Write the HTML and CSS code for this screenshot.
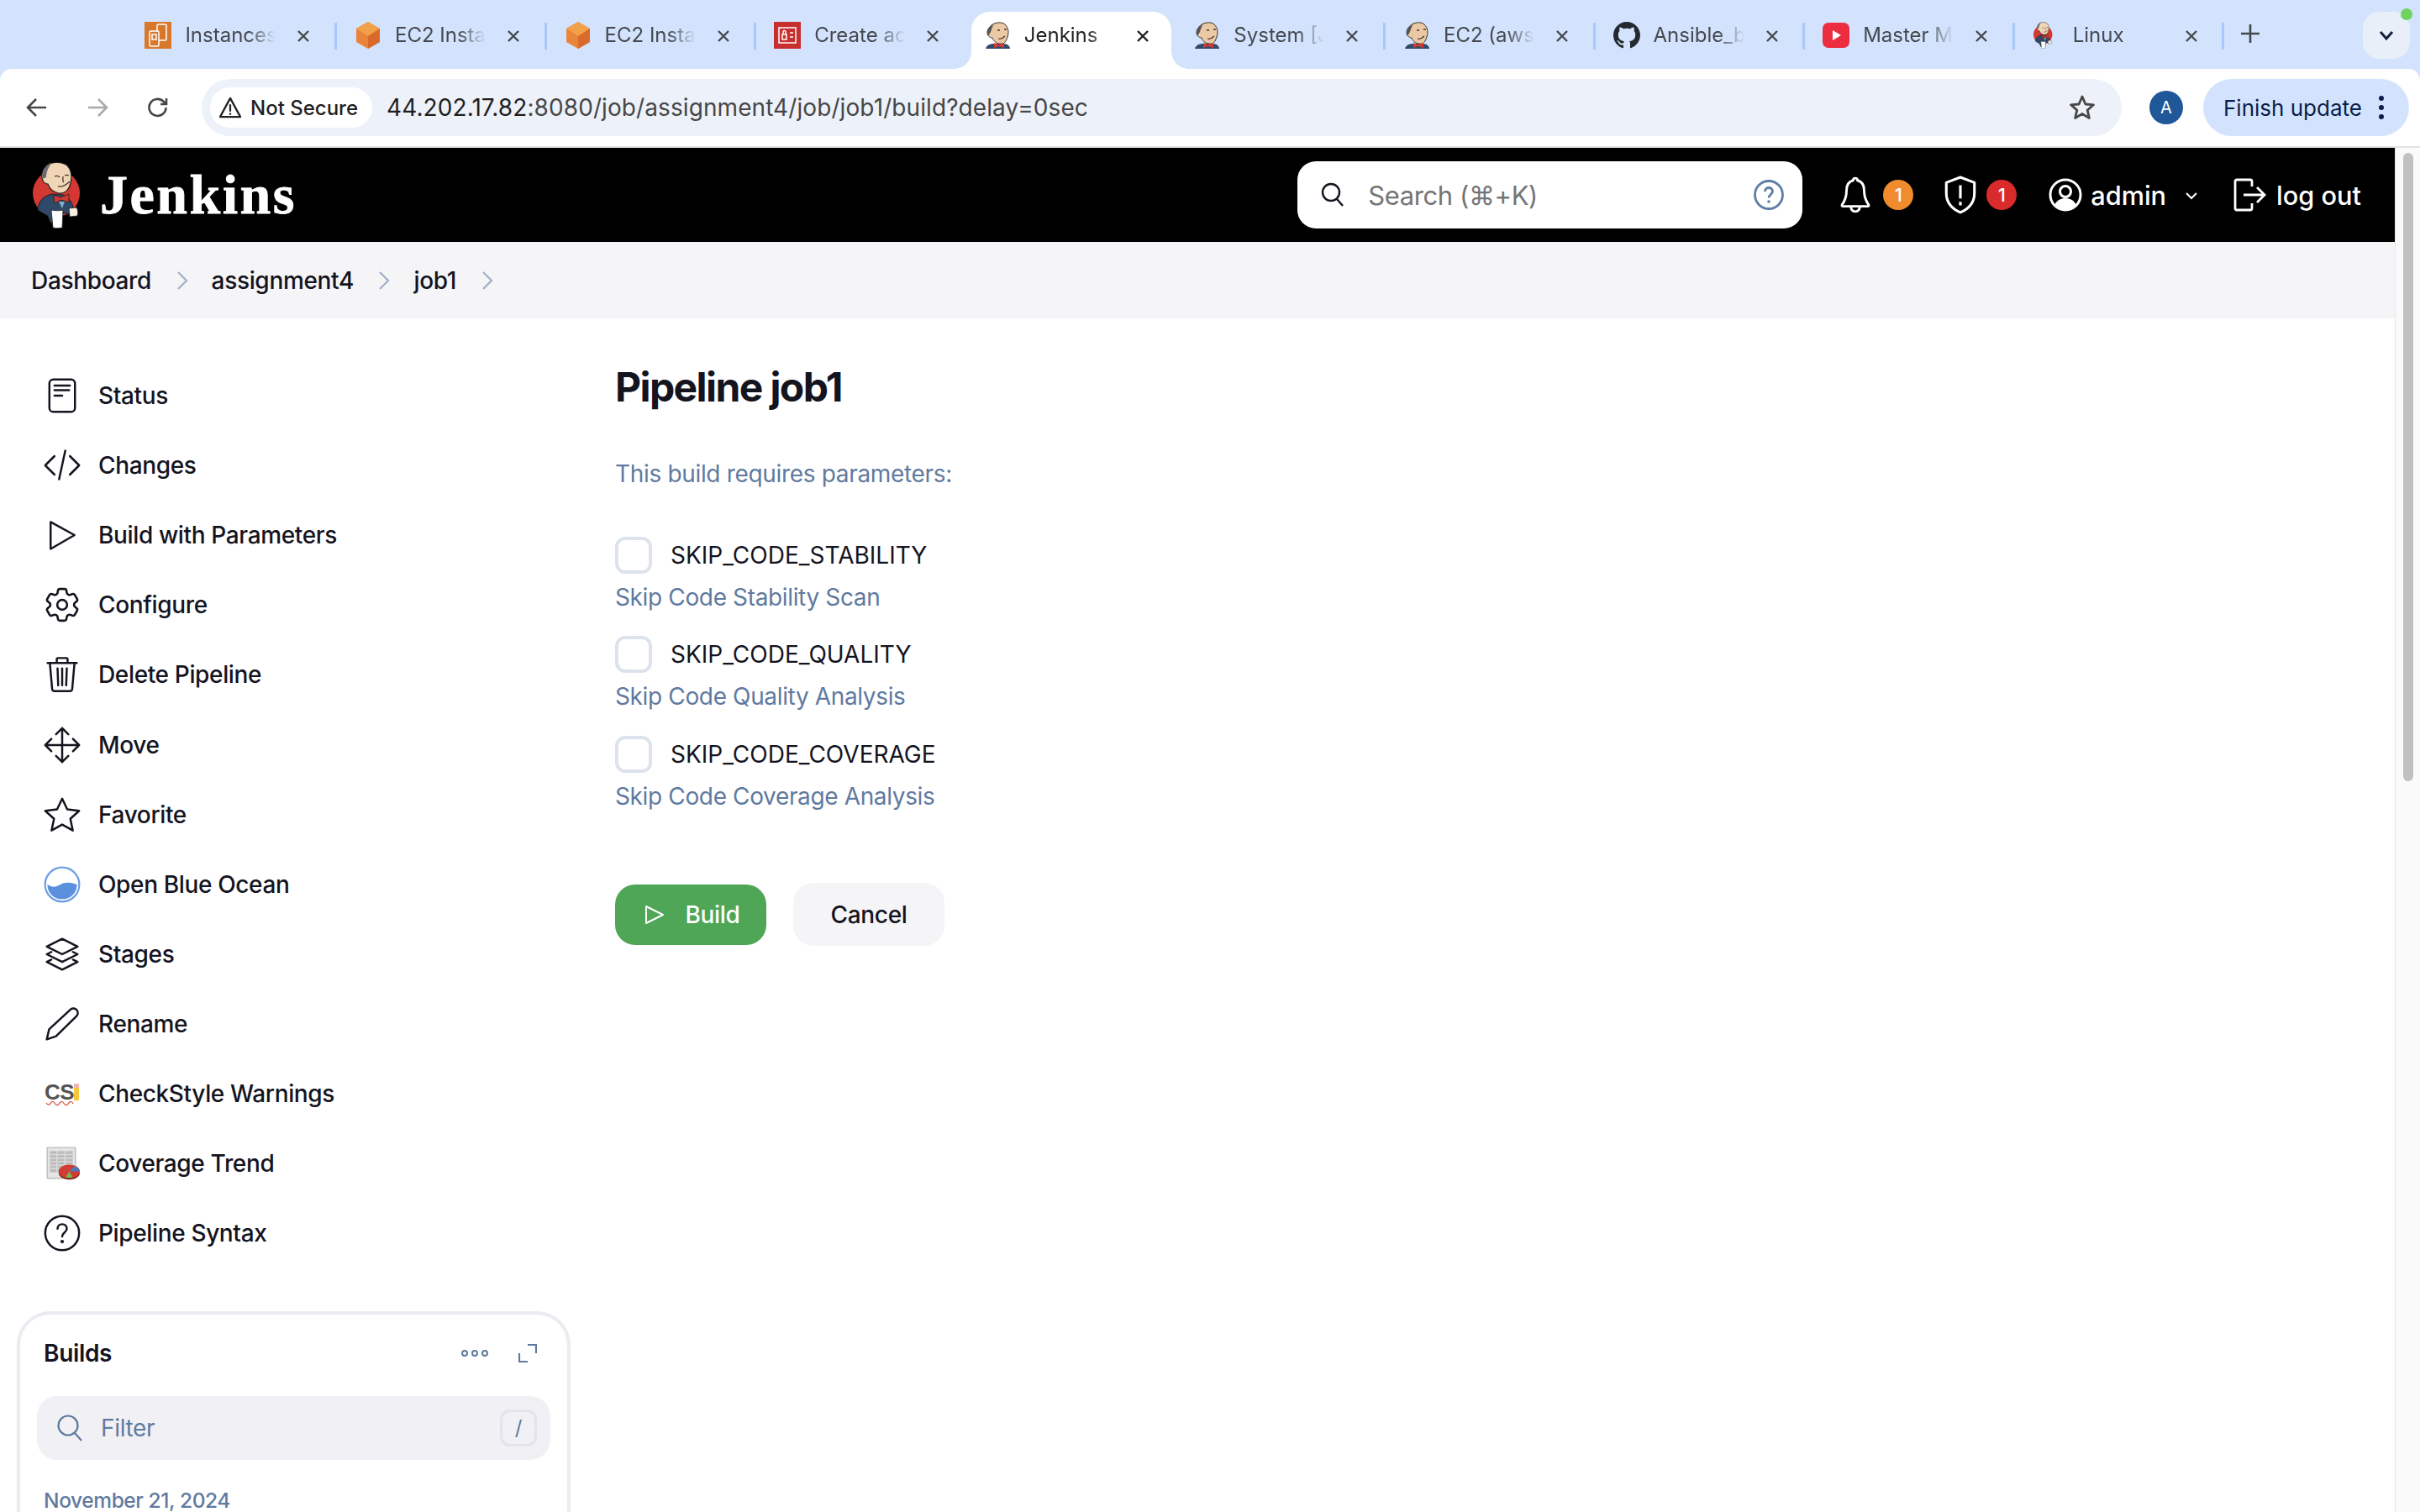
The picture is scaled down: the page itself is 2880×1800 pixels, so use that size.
FILE: index.html
```html
<!DOCTYPE html>
<html lang="en">
<head>
<meta charset="utf-8">
<title>Jenkins</title>
<link rel="stylesheet" href="styles.css">
</head>
<body>
<svg class="sprite" xmlns="http://www.w3.org/2000/svg">
  <symbol id="butler" viewBox="-1 0 32 32">
    <path d="M1 32c1-4 5-6 10-6h11c5 0 8 3 8 6z" fill="#2f4a68"/>
    <path d="M6 6C9 1 20-1 24 3c4 4 5 9 3 15-2 6-4 9-9 8-5 0-8-4-9-7-4 0-6-4-6-6 0-3 1-5 3-7z" fill="#ecc9a5" stroke="#333" stroke-width="1"/>
    <path d="M6 6C3 9 2 14 4 17l3-5c1-3 2-7 4-9z" fill="#555"/>
    <path d="M15 10h3M23 9h3M16 20c3 1 6-1 8-3" stroke="#49382c" stroke-width="1.300" fill="none"/>
    <path d="M11 25l5 2 7-2v6l-7-2-5 2z" fill="#d33833"/>
  </symbol>
  <symbol id="logo" viewBox="8 7 57 80">
    <circle cx="37" cy="45" r="28" fill="#d33833"/>
    <path d="M15 65c0-10 7-17 17-19l13 1c7 3 11 9 12 15l-5 8-7-2-2 14-13-2-3-8z" fill="#2f4a68" stroke="#231f20" stroke-width="1"/>
    <path d="M24 14c4-6 18-8 26-2 5 5 6 14 4 21-2 8-7 13-14 12-6-1-11-5-13-11-5 0-8-6-7-10 0-4 2-8 4-10z" fill="#f0d6b7" stroke="#231f20" stroke-width="1.200"/>
    <path d="M24 14c-3 3-5 9-3 14l4-2c0-5 2-12 7-17-3 0-6 2-8 5z" fill="#6d6b6d"/>
    <path d="M35 25c2-1 4-1 6 1M47 24c2-1 3-1 5 0M39 37c5 1 10-2 14-6M45 25c0 3-1 6 1 7" stroke="#49382c" stroke-width="1.300" fill="none"/>
    <path d="M34 47l8 3 10-4v10l-9-3-8 4z" fill="#d33833" stroke="#231f20" stroke-width=".8"/>
    <path d="M40 55h7l-3 8z" fill="#81b0c4"/>
    <path d="M31 65c5 1 10 1 14 0l-1 21c-4 1-8 1-11 0z" fill="#fff" stroke="#231f20" stroke-width=".8"/>
    <path d="M52 63l9-1c2 3 2 7 1 10l-9 1z" fill="#f5ede0" stroke="#231f20" stroke-width=".8"/>
  </symbol>
  <symbol id="ecube" viewBox="0 0 32 32">
    <path d="M16 0l14 8v16l-14 8-14-8V8z" fill="#e8853b"/>
    <path d="M16 0l14 8-14 9-14-9z" fill="#f2a04a"/>
    <path d="M16 17l14-9v16l-14 8z" fill="#d96a2c"/>
  </symbol>
  <symbol id="github" viewBox="0 0 16 16"><path fill="#24292f" d="M8 0C3.58 0 0 3.58 0 8c0 3.54 2.29 6.53 5.47 7.59.4.07.55-.17.55-.38 0-.19-.01-.82-.01-1.49-2.01.37-2.53-.49-2.69-.94-.09-.23-.48-.94-.82-1.13-.28-.15-.68-.52-.01-.53.63-.01 1.08.58 1.23.82.72 1.21 1.87.87 2.33.66.07-.52.28-.87.51-1.07-1.78-.2-3.64-.89-3.64-3.95 0-.87.31-1.59.82-2.15-.08-.2-.36-1.02.08-2.12 0 0 .67-.21 2.2.82.64-.18 1.32-.27 2-.27s1.36.09 2 .27c1.53-1.04 2.2-.82 2.2-.82.44 1.1.16 1.92.08 2.12.51.56.82 1.27.82 2.15 0 3.07-1.87 3.75-3.65 3.95.29.25.54.73.54 1.48 0 1.07-.01 1.93-.01 2.2 0 .21.15.46.55.38A8.01 8.01 0 0016 8c0-4.42-3.58-8-8-8z"/></symbol>
  <symbol id="close" viewBox="0 0 16 16"><path d="M2 2l12 12M14 2L2 14" fill="none" stroke-width="2.400"/></symbol>
</svg>

<div class="tabbar">
  <div class="tab sep">
    <svg class="favicon" viewBox="0 0 32 32"><rect width="32" height="32" fill="#d9782a"/><g fill="none" stroke="#fff" stroke-width="1.500"><rect x="15" y="3" width="11" height="19" rx="1.500"/><rect x="6" y="11" width="11" height="18" rx="1.500" fill="#d9782a"/><rect x="9" y="15" width="5" height="6"/></g></svg>
    <span class="tab-title">Instances | EC2</span><svg class="tab-x"><use href="#close"/></svg>
  </div>
  <div class="tab sep">
    <svg class="favicon"><use href="#ecube"/></svg>
    <span class="tab-title">EC2 Instance</span><svg class="tab-x"><use href="#close"/></svg>
  </div>
  <div class="tab sep">
    <svg class="favicon"><use href="#ecube"/></svg>
    <span class="tab-title">EC2 Instance</span><svg class="tab-x"><use href="#close"/></svg>
  </div>
  <div class="tab">
    <svg class="favicon" viewBox="0 0 32 32"><rect width="32" height="32" fill="#c7302f"/><g fill="none" stroke="#fff" stroke-width="1.500"><rect x="6" y="7" width="20" height="18"/><rect x="10" y="15" width="5" height="6"/><path d="M11 15v-3a1.500 1.500 0 013 0v3M19 13h4M19 18h4"/></g></svg>
    <span class="tab-title">Create access</span><svg class="tab-x"><use href="#close"/></svg>
  </div>
  <div class="tab active">
    <svg class="favicon"><use href="#butler"/></svg>
    <span class="tab-title">Jenkins</span><svg class="tab-x"><use href="#close"/></svg>
  </div>
  <div class="tab sep">
    <svg class="favicon"><use href="#butler"/></svg>
    <span class="tab-title">System [Jenkins]</span><svg class="tab-x"><use href="#close"/></svg>
  </div>
  <div class="tab sep">
    <svg class="favicon"><use href="#butler"/></svg>
    <span class="tab-title">EC2 (aws-ec2)</span><svg class="tab-x"><use href="#close"/></svg>
  </div>
  <div class="tab sep">
    <svg class="favicon"><use href="#github"/></svg>
    <span class="tab-title">Ansible_book</span><svg class="tab-x"><use href="#close"/></svg>
  </div>
  <div class="tab sep">
    <svg class="favicon" viewBox="0 0 32 32"><rect y="1" width="32" height="30" rx="7" fill="#ec2d3f"/><path d="M12 10l10 6-10 6z" fill="#fff"/></svg>
    <span class="tab-title">Master Microservices</span><svg class="tab-x"><use href="#close"/></svg>
  </div>
  <div class="tab sep">
    <svg class="favicon"><use href="#logo" x="0" y="0" width="24" height="32"/></svg>
    <span class="tab-title">Linux</span><svg class="tab-x"><use href="#close"/></svg>
  </div>
  <svg class="newtab" viewBox="0 0 22 22"><path d="M11 0v22M0 11h22" fill="none" stroke="#45484e" stroke-width="2.600"/></svg>
  <div class="tab-search">
    <svg class="ts-chev" viewBox="0 0 20 14"><path d="M3 3l7 8 7-8" fill="none" stroke="#14203a" stroke-width="3"/></svg>
    <span class="green-dot"></span>
  </div>
</div>

<div class="toolbar">
  <svg class="nav-icon" viewBox="0 0 28 28"><path d="M25 14H4M13 4L3 14l10 10" fill="none" stroke="#474747" stroke-width="2.600"/></svg>
  <svg class="nav-icon" viewBox="0 0 28 28"><path d="M3 14h21M15 4l10 10-10 10" fill="none" stroke="#a9a9a9" stroke-width="2.600"/></svg>
  <svg class="nav-icon" viewBox="0 0 28 28"><path d="M23.500 14a10 10 0 11-3-7.200L24 10M24 3v7h-7" fill="none" stroke="#474747" stroke-width="2.600"/></svg>
  <div class="omnibox">
    <div class="secure-chip">
      <svg class="warn" viewBox="0 0 30 28"><path d="M15 2L2 26h26z" fill="none" stroke="#1f1f1f" stroke-width="2.400" stroke-linejoin="round"/><path d="M15 10v9M15 21v2.500" stroke="#1f1f1f" stroke-width="2.400"/></svg>
      <span>Not Secure</span>
    </div>
    <div class="url"><span class="url-host">44.202.17.82</span>:8080/job/assignment4/job/job1/build?delay=0sec</div>
    <svg class="bm-star" viewBox="0 0 32 32"><path d="M16 3l3.900 9 9.600.8-7.300 6.300 2.200 9.500L16 23.500l-8.400 5.100 2.200-9.500-7.300-6.300 9.600-.8z" fill="none" stroke="#474747" stroke-width="2.800" stroke-linejoin="round"/></svg>
  </div>
  <div class="avatar">A</div>
  <div class="finish"><span>Finish update</span><svg class="dots" viewBox="0 0 8 30"><circle cx="4" cy="4" r="3"/><circle cx="4" cy="15" r="3"/><circle cx="4" cy="26" r="3"/></svg></div>
</div>

<div class="viewport">
  <div class="page">
    <header class="jhead">
      <div class="brand">
        <svg class="logo"><use href="#logo"/></svg>
        <span class="brand-name">Jenkins</span>
      </div>
      <div class="head-right">
        <div class="search">
          <svg class="s-ic" viewBox="0 0 28 30"><circle cx="12" cy="12" r="10" fill="none" stroke="#14141f" stroke-width="2.400"/><path d="M19 20l7 8" stroke="#14141f" stroke-width="2.400"/></svg>
          <span class="s-text">Search (⌘+K)</span>
          <svg class="s-help" viewBox="0 0 36 36"><circle cx="18" cy="18" r="16.500" fill="none" stroke="#5f7da5" stroke-width="2.800"/><path d="M13.500 14c0-6 9-6 9 0 0 3.500-4.500 3.500-4.500 7.500" fill="none" stroke="#5f7da5" stroke-width="2.800"/><circle cx="18" cy="26" r="1.800" fill="#5f7da5"/></svg>
        </div>
        <svg class="h-ic bell" viewBox="0 0 36 42"><path d="M18 2c-1.500 0-2.500 1-2.500 2.500C10 6 8 11 8 16c0 8-2 12-5 16-.7 1 0 2 1 2h28c1 0 1.700-1 1-2-3-4-5-8-5-16 0-5-2-10-7.500-11.500C20.500 3 19.500 2 18 2zM13 34c0 4 2 6 5 6s5-2 5-6" fill="none" stroke="#fff" stroke-width="2.800"/></svg>
        <span class="badge orange">1</span>
        <svg class="h-ic shield" viewBox="0 0 40 44"><path d="M20 2L4 8v12c0 11 7 18 16 22 9-4 16-11 16-22V8z" fill="none" stroke="#fff" stroke-width="3" stroke-linejoin="round"/><path d="M20 11v15M20 30v4" stroke="#fff" stroke-width="3"/></svg>
        <span class="badge red">1</span>
        <svg class="h-ic user" viewBox="0 0 40 40"><circle cx="20" cy="20" r="18" fill="none" stroke="#fff" stroke-width="3"/><circle cx="20" cy="16" r="6.500" fill="none" stroke="#fff" stroke-width="3"/><path d="M7 32c3-6 8-8 13-8s10 2 13 8l-6 5H13z" fill="#fff"/></svg>
        <span class="h-link admin">admin</span>
        <svg class="h-chev" viewBox="0 0 16 10"><path d="M2 2l6 6 6-6" fill="none" stroke="#fff" stroke-width="2"/></svg>
        <svg class="h-ic logout" viewBox="0 0 40 40"><path d="M22 10V4a2 2 0 00-2-2H4a2 2 0 00-2 2v32a2 2 0 002 2h16a2 2 0 002-2v-6" fill="none" stroke="#fff" stroke-width="2.800"/><path d="M12 20h24M28 11l9 9-9 9" fill="none" stroke="#fff" stroke-width="2.800"/></svg>
        <span class="h-link">log out</span>
      </div>
    </header>

    <nav class="crumbs">
      <span>Dashboard</span><svg class="cr" viewBox="0 0 14 24"><path d="M2 2l10 10L2 22" fill="none" stroke="#a3b1c9" stroke-width="2.400"/></svg>
      <span>assignment4</span><svg class="cr" viewBox="0 0 14 24"><path d="M2 2l10 10L2 22" fill="none" stroke="#a3b1c9" stroke-width="2.400"/></svg>
      <span>job1</span><svg class="cr" viewBox="0 0 14 24"><path d="M2 2l10 10L2 22" fill="none" stroke="#a3b1c9" stroke-width="2.400"/></svg>
    </nav>

    <div class="body-row">
      <aside class="side">
        <ul class="tasks">
          <li><svg class="ti" viewBox="0 0 24 24"><rect x="3.700" y="1.500" width="16.600" height="21" rx="2.500"/><path d="M7 5.500h10M7 8.500h9.500M7 12h5"/></svg>Status</li>
          <li><svg class="ti" viewBox="0 0 24 24"><path d="M7 6l-6 6 6 6M17 6l6 6-6 6M14 2.500L10 21"/></svg>Changes</li>
          <li><svg class="ti" viewBox="0 0 24 24"><path d="M4.500 3.500L20 12 4.500 21z"/></svg>Build with Parameters</li>
          <li><svg class="ti gear" viewBox="1.500 1.500 21 21"><path d="M9.594 3.94c.09-.542.56-.94 1.11-.94h2.593c.55 0 1.02.398 1.11.94l.213 1.281c.063.374.313.686.645.87.074.04.147.083.22.127.325.196.72.257 1.075.124l1.217-.456a1.125 1.125 0 011.37.49l1.296 2.247a1.125 1.125 0 01-.26 1.431l-1.003.827c-.293.241-.438.613-.43.992a7.723 7.723 0 010 .255c-.008.378.137.75.43.991l1.004.827c.424.35.534.955.26 1.43l-1.298 2.247a1.125 1.125 0 01-1.369.491l-1.217-.456c-.355-.133-.75-.072-1.076.124a6.57 6.57 0 01-.22.128c-.331.183-.581.495-.644.869l-.213 1.28c-.09.543-.56.941-1.11.941h-2.594c-.55 0-1.02-.398-1.11-.94l-.213-1.281c-.062-.374-.312-.686-.644-.87a6.52 6.52 0 01-.22-.127c-.325-.196-.72-.257-1.076-.124l-1.217.456a1.125 1.125 0 01-1.369-.49l-1.297-2.247a1.125 1.125 0 01.26-1.431l1.004-.827c.292-.24.437-.613.43-.992a6.932 6.932 0 010-.255c.007-.378-.138-.75-.43-.992l-1.004-.827a1.125 1.125 0 01-.26-1.43l1.297-2.247a1.125 1.125 0 011.37-.491l1.216.456c.356.133.751.072 1.076-.124.072-.044.146-.087.22-.128.332-.183.582-.495.644-.869l.214-1.281z"/><circle cx="12" cy="12" r="2.800"/></svg>Configure</li>
          <li><svg class="ti" viewBox="0 0 24 24"><path d="M2.500 4.500h19M8.500 4.500V2a.7.7 0 01.700-.7h5.600a.7.7 0 01.700.7v2.500M4 4.500l1.500 17a1.500 1.500 0 001.500 1.300h10a1.500 1.500 0 001.500-1.300l1.500-17M9 8l.4 11M12 8v11M15 8l-.4 11"/></svg>Delete Pipeline</li>
          <li><svg class="ti" viewBox="0 0 24 24"><path d="M12 1v22M1 12h22M8 5l4-4 4 4M8 19l4 4 4-4M5 8l-4 4 4 4M19 8l4 4-4 4"/></svg>Move</li>
          <li><svg class="ti" viewBox="0 0 24 24"><path d="M12 1.500l3.300 7 7.700.9-5.700 5.200 1.600 7.600L12 18.300l-6.900 3.900 1.600-7.600L1 9.400l7.700-.9z"/></svg>Favorite</li>
          <li><svg class="ti ocean" viewBox="0 0 40 40"><circle cx="20" cy="20" r="18.500" fill="#fff" stroke="#6c9fe6" stroke-width="2"/><path d="M4 20c5 3 8 3 12 1s9-5 20-1c0 9-7 16-16 16S4 29 4 20z" fill="#5b90dd"/></svg>Open Blue Ocean</li>
          <li><svg class="ti" viewBox="0 0 24 24"><path d="M12 2L2 7l10 5 10-5zM5 10.500L2 12l10 5 10-5-3-1.500M5 15.500L2 17l10 5 10-5-3-1.500"/></svg>Stages</li>
          <li><svg class="ti" viewBox="0 0 24 24"><path d="M2 22l1.500-6.500L17.500 2.500c1.200-1 3-.8 4 .5s.8 3-.3 4L8 20z"/></svg>Rename</li>
          <li><span class="cs-icon"><span class="cs-t">CS</span><span class="cs-bar"></span><svg class="cs-wave" viewBox="0 0 40 6"><path d="M1 2c3 3 4 3 6 0s4-2 6 1 4 2 6-1 4-2 6 1 4 2 6-1 4-2 6 1" fill="none" stroke="#d64a3a" stroke-width="1.300"/></svg></span>CheckStyle Warnings</li>
          <li><svg class="ti cov" viewBox="-3 -1 42 40"><rect x="1" y="1" width="32" height="35" fill="#e5e5e5" stroke="#bdbdbd"/><path d="M4 5h26v24H4z" fill="#bcbcbc"/><path d="M4 9h26M4 13h26M4 17h26M4 21h26M4 25h26M12 5v24M21 5v24" stroke="#dcdcdc"/><ellipse cx="26" cy="30" rx="12" ry="7.500" fill="#8c2b23"/><ellipse cx="26" cy="28" rx="12" ry="7.500" fill="#d23c32"/><path d="M26 28l12 0a12 7.500 0 00-6-6z" fill="#4a78b8"/><path d="M26 28l-4 7a12 7.500 0 008 0z" fill="#7ab84a"/></svg>Coverage Trend</li>
          <li><svg class="ti" viewBox="0 0 24 24"><circle cx="12" cy="12" r="11"/><path d="M9 9.200c0-4 6-4 6 0 0 2.400-3 2.400-3 5"/><circle cx="12" cy="17.500" r=".5"/></svg>Pipeline Syntax</li>
        </ul>
        <section class="builds">
          <div class="b-head">
            <span class="b-title">Builds</span>
            <svg class="b-dots" viewBox="0 0 32 10"><g fill="none" stroke="#5f7a9f" stroke-width="2"><circle cx="4" cy="5" r="3"/><circle cx="16" cy="5" r="3"/><circle cx="28" cy="5" r="3"/></g></svg>
            <svg class="b-exp" viewBox="0 0 22 22"><path d="M11 1h10v10M1 11v10h10" fill="none" stroke="#5f7a9f" stroke-width="2.200"/></svg>
          </div>
          <div class="b-filter">
            <svg class="bf-ic" viewBox="0 0 30 34"><circle cx="13" cy="14" r="11.500" fill="none" stroke="#5f7a9f" stroke-width="2.200"/><path d="M21 23l8 9" stroke="#5f7a9f" stroke-width="2.200"/></svg>
            <span class="bf-text">Filter</span>
            <span class="bf-key">/</span>
          </div>
          <div class="b-date">November 21, 2024</div>
        </section>
      </aside>

      <main class="content">
        <h1 class="title">Pipeline job1</h1>
        <p class="req">This build requires parameters:</p>
        <div class="param"><label class="p-row"><span class="cb"></span>SKIP_CODE_STABILITY</label><div class="p-desc">Skip Code Stability Scan</div></div>
        <div class="param"><label class="p-row"><span class="cb"></span>SKIP_CODE_QUALITY</label><div class="p-desc">Skip Code Quality Analysis</div></div>
        <div class="param"><label class="p-row"><span class="cb"></span>SKIP_CODE_COVERAGE</label><div class="p-desc">Skip Code Coverage Analysis</div></div>
        <div class="actions">
          <button class="btn primary"><svg class="b-play" viewBox="0 0 24 24"><path d="M2 2l20 10L2 22z" fill="none" stroke="#fff" stroke-width="2" stroke-linejoin="round"/></svg>Build</button>
          <button class="btn ghost">Cancel</button>
        </div>
      </main>
    </div>
  </div>
  <div class="scrolltrack"><div class="thumb"></div></div>
</div>
</body>
</html>
```
FILE: styles.css
```css
* { box-sizing: border-box; }
html, body { margin: 0; padding: 0; height: 1800px; overflow: hidden; background: #d3e3fd; }
body { font-family: Inter, "Liberation Sans", sans-serif; color: #14141f; }
.sprite { display: none; }

/* browser tabs */
.tabbar { height: 82px; background: #d3e3fd; display: flex; padding-left: 149.4px; position: relative; }
.tab { width: 249.6px; height: 82px; padding: 26px 0 0 23px; display: flex; align-items: flex-start; position: relative; flex: none; }
.favicon { width: 32px; height: 32px; flex: none; position: relative; }
.tab-title { width: 108px; margin-left: 16px; margin-right: 25px; font-size: 24px; line-height: 32px; color: #45484e; white-space: nowrap; overflow: hidden; -webkit-mask-image: linear-gradient(to right, #000 70%, transparent 100%); mask-image: linear-gradient(to right, #000 70%, transparent 100%); position: relative; flex: none; }
.tab-x { width: 16px; height: 16px; margin-top: 9px; stroke: #45484e; flex: none; position: relative; }
.tab.sep::after { content: ""; position: absolute; right: -2px; top: 27px; width: 3px; height: 32px; background: #a8c7fa; }
.tab.active::before { content: ""; position: absolute; left: 8px; right: 3px; top: 14px; bottom: 0; background: #fff; border-radius: 22px 22px 0 0; }
.tab.active::after { content: ""; position: absolute; left: -12px; right: -17px; bottom: 0; height: 20px; background: radial-gradient(circle at 0 0, transparent 19.500px, #fff 20px) left bottom / 20px 20px no-repeat, radial-gradient(circle at 100% 0, transparent 19.500px, #fff 20px) right bottom / 20px 20px no-repeat; }
.tab.active .tab-title { color: #1f1f1f; }
.tab.active .tab-x { stroke: #1f1f1f; }
.newtab { width: 22px; height: 22px; margin: 29px 0 0 22px; flex: none; }
.tab-search { width: 56px; height: 56px; margin: 14px 12px 0 auto; background: #e8eff9; border-radius: 20px; display: flex; align-items: center; justify-content: center; position: relative; }
.ts-chev { width: 20px; height: 14px; }
.green-dot { position: absolute; right: -3px; top: -4px; width: 14px; height: 14px; background: #6fd35f; border-radius: 50%; }

/* toolbar */
.toolbar { height: 94px; background: #fff; border-bottom: 2px solid #e2e2e2; display: flex; align-items: flex-start; padding: 12px 13px 0 30px; border-radius: 14px 14px 0 0; }
.nav-icon { width: 28px; height: 28px; margin-top: 20px; margin-right: 44px; flex: none; }
.nav-icon:nth-child(3) { margin-right: 38px; }
.omnibox { width: 2285px; height: 68px; background: #edf2fa; border-radius: 34px; display: flex; align-items: center; padding: 0 31px 0 10px; flex: none; }
.secure-chip { width: 193px; height: 48px; background: #fff; border-radius: 24px; display: flex; align-items: center; font-size: 24px; font-weight: 500; color: #1f1f1f; padding-left: 10px; gap: 10px; flex: none; }
.warn { width: 28px; height: 26px; }
.url { margin-left: 17px; font-size: 28px; color: #474747; flex: 1; letter-spacing: .09px; }
.url-host { color: #1f1f1f; }
.bm-star { width: 32px; height: 32px; }
.avatar { width: 40px; height: 40px; margin: 14px 0 0 33px; background: #1f5798; color: #fff; border-radius: 50%; font-size: 20px; line-height: 40px; text-align: center; flex: none; }
.finish { width: 245px; height: 68px; margin-left: 24px; background: #d3e3fd; border-radius: 34px; display: flex; align-items: center; padding-left: 24px; font-size: 26px; color: #0a1e4a; flex: none; }
.dots { width: 8px; height: 30px; margin-left: 19px; fill: #0a1e4a; }

/* page */
.viewport { display: flex; height: 1624px; background: #fff; }
.page { width: 2850px; flex: none; overflow: hidden; background: #fff; }
.scrolltrack { width: 30px; background: #fafafa; border-left: 1px solid #e8e8e8; padding: 6px 0 0 9px; }
.thumb { width: 12px; height: 748px; background: #c1c1c1; border-radius: 6px; }

.jhead { height: 112px; background: #000; display: flex; align-items: center; justify-content: space-between; padding-left: 38px; }
.brand { display: flex; align-items: center; }
.logo { width: 57px; height: 80px; }
.brand-name { margin-left: 24px; font-family: "Liberation Serif", serif; font-weight: 700; font-size: 66px; letter-spacing: 2.5px; color: #fff; line-height: 76px; -webkit-text-stroke: .8px #fff; }
.head-right { display: flex; align-items: center; padding-right: 40px; color: #fff; }
.search { width: 601px; height: 80px; background: #fff; border-radius: 22px; display: flex; align-items: center; padding: 0 22px 0 28px; margin-right: 44px; }
.s-ic { width: 28px; height: 30px; }
.s-text { margin-left: 28px; font-size: 31px; letter-spacing: -.4px; color: #757575; flex: 1; }
.s-help { width: 36px; height: 36px; }
.h-ic { flex: none; }
.bell { width: 38px; height: 44px; }
.badge { width: 36px; height: 36px; border-radius: 50%; font-size: 22px; line-height: 36px; text-align: center; color: #fff; margin-left: 14px; font-weight: 500; flex: none; }
.orange { background: #f08c2e; }
.red { background: #d92b2b; margin-left: 9px; }
.shield { width: 44px; height: 46px; margin-left: 34px; }
.user { width: 40px; height: 40px; margin-left: 38px; }
.h-link { font-size: 30.700px; font-weight: 500; white-space: nowrap; }
.admin { margin-left: 10px; }
.h-chev { width: 16px; height: 10px; margin: 2px 0 0 22px; }
.logout { width: 40px; height: 40px; margin: 0 11px 0 42px; }

.crumbs { height: 91px; background: #f5f5f8; display: flex; align-items: center; padding-left: 37px; font-size: 28px; letter-spacing: -.33px; font-weight: 500; color: #14141f; }
.cr { width: 14px; height: 24px; margin: 0 28px 0 29.500px; }

.body-row { display: flex; }
.side { width: 732px; flex: none; padding-top: 50.5px; }
.tasks { list-style: none; margin: 0 0 51px; padding: 0; }
.tasks li { height: 83.1px; display: flex; align-items: center; padding-left: 52px; font-size: 28px; letter-spacing: -.36px; font-weight: 500; color: #14141f; }
.ti { width: 44px; height: 44px; margin-right: 21px; flex: none; fill: none; stroke: #14141f; stroke-width: 1.350; stroke-linejoin: round; stroke-linecap: round; }
.gear { stroke-width: 1.250; }
.ocean, .cov { stroke: none; }
.cs-icon { width: 44px; height: 28px; margin-right: 21px; flex: none; position: relative; display: block; }
.cs-t { font-family: "Liberation Sans", sans-serif; font-weight: 700; font-size: 26px; line-height: 24px; color: #555; letter-spacing: -.5px; display: block; margin-left: 1px; }
.cs-bar { position: absolute; right: 2px; top: 2px; width: 6px; height: 20px; background: linear-gradient(#f1b7b0 25%, #f6c63c 25%); }
.cs-wave { position: absolute; left: 2px; top: 23px; width: 36px; height: 6px; }

.builds { margin-left: 20px; width: 659px; height: 400px; border: 4px solid #ebebf2; border-bottom: 0; border-radius: 40px 40px 0 0; padding: 0 20px; }
.b-head { height: 97px; display: flex; align-items: center; padding: 0 16px 4px 8px; }
.b-title { font-size: 28px; letter-spacing: -.33px; font-weight: 600; flex: 1; }
.b-dots { width: 32px; height: 10px; margin-right: 36px; }
.b-exp { width: 22px; height: 22px; }
.b-filter { height: 76px; background: #f1f1f5; border-radius: 24px; display: flex; align-items: center; padding: 0 16px 0 24px; color: #5f7a9f; }
.bf-ic { width: 30px; height: 34px; }
.bf-text { flex: 1; margin-left: 22px; font-size: 28px; letter-spacing: -.33px; }
.bf-key { width: 44px; height: 44px; border: 3px solid #e3e3ec; border-radius: 12px; font-size: 24px; line-height: 38px; text-align: center; }
.b-date { margin: 30px 0 0 8px; font-size: 24.500px; letter-spacing: -.4px; line-height: 36px; color: #5f7a9f; font-weight: 500; }

.content { flex: 1; padding-top: 52px; }
.title { margin: 0; font-size: 48px; line-height: 60px; font-weight: 700; letter-spacing: -1.6px; color: #14141f; }
.req { margin: 53px 0 0; font-size: 28px; letter-spacing: -.33px; line-height: 40px; color: #5f7a9f; }
.param { height: 118.400px; }
.req + .param { margin-top: 55px; }
.p-row { display: flex; align-items: center; height: 44px; font-size: 28px; color: #14141f; }
.cb { width: 44px; height: 44px; margin-right: 22px; border: 4px solid #dde3ec; border-radius: 12px; background: #fff; flex: none; }
.p-desc { margin-top: 8px; font-size: 28px; letter-spacing: -.36px; line-height: 40px; color: #5f7a9f; }
.actions { display: flex; align-items: center; gap: 32px; margin-top: 57px; }
.btn { width: 180px; border: 0; font-family: inherit; font-size: 28px; letter-spacing: -.33px; font-weight: 500; border-radius: 24px; display: flex; align-items: center; justify-content: center; padding: 0; }
.primary { height: 72px; background: #4ea656; color: #fff; padding-left: 4px; }
.ghost { height: 75px; background: #f5f5f8; color: #14141f; }
.b-play { width: 24px; height: 24px; margin-right: 24px; }
```
